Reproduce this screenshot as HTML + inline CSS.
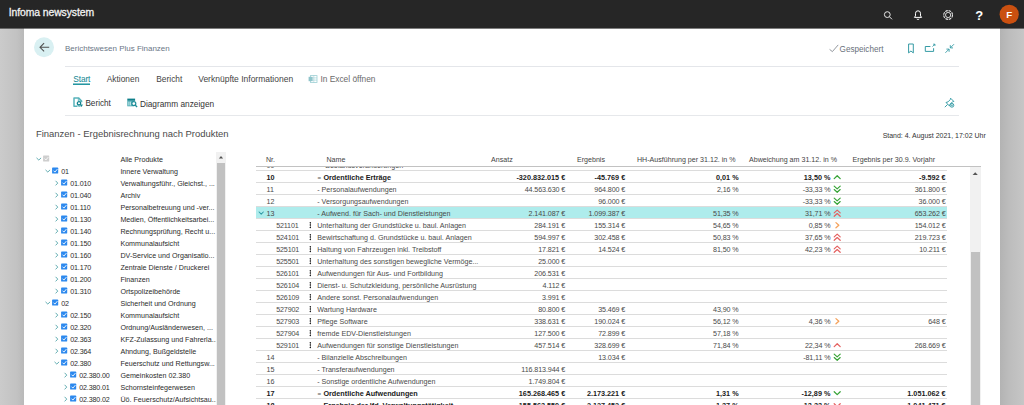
<!DOCTYPE html>
<html><head><meta charset="utf-8"><title>Infoma newsystem</title>
<style>
html,body{margin:0;padding:0}
body{width:1024px;height:405px;overflow:hidden;position:relative;background:#c4c4c4;font-family:"Liberation Sans",sans-serif;color:#333}
.a{position:absolute;white-space:nowrap}
#edgeL{left:0;top:28px;width:24px;height:377px;background:linear-gradient(90deg,#cbcbcb 0%,#c2c2c2 70%,#b9b9b9 100%)}
#edgeR{left:1000px;top:28px;width:24px;height:377px;background:linear-gradient(90deg,#b3b3b3 0%,#bcbcbc 35%,#c6c6c6 100%)}
#card{left:24px;top:28px;width:976px;height:377px;background:#fff}
#top{left:0;top:0;width:1024px;height:28px;background:#262626}
#brand{left:8.7px;top:5.8px;font-size:10.4px;line-height:14px;color:#f3f3f3;-webkit-text-stroke:0.28px #f3f3f3;letter-spacing:-0.08px}
.hl{height:1px;background:#e1e1e1}
.tab{font-size:8.35px;line-height:12px;color:#444;top:72.7px}
.act{font-size:8.2px;line-height:12px;color:#333;top:98px}
.t{font-size:7.15px;line-height:12px;color:#2b2b2b}
.r{font-size:7.15px;line-height:12px;color:#4a4a4a}
.rb{font-weight:bold;color:#1a1a1a;font-size:7.25px}
.n{text-align:right}
.th{font-size:7.1px;line-height:12px;color:#444;top:154.3px}
</style></head><body>
<div class="a" id="edgeL"></div><div class="a" id="edgeR"></div>
<div class="a" id="card"></div>
<div class="a" id="top"></div><div class="a" style="left:0;top:28px;width:1024px;height:1px;background:rgba(38,38,38,0.6)"></div>
<div class="a" id="brand">Infoma newsystem</div>

<svg class="a" style="left:870px;top:0" width="154" height="28" viewBox="0 0 154 28">
<g fill="none" stroke="#e8e8e8" stroke-width="1">
<circle cx="17.3" cy="14.6" r="2.9"/><path d="M19.5 16.8 L22 19.3"/>
<path d="M44.4 17.4 h7.2 l-1.1-1.5 v-2.6 a2.5 2.5 0 0 0-5 0 v2.6z" stroke="#fff" stroke-width="1.0" stroke-linejoin="round"/><path d="M47 18.7 a1 .9 0 0 0 2 0" stroke="#fff" stroke-width="0.9"/>
<circle cx="78.1" cy="15" r="4.4" stroke-width="1.1" stroke-dasharray="2.6 0.85"/><circle cx="78.1" cy="15" r="2.6" stroke-width="0.9"/>
</g>
<text x="109.2" y="20.1" font-family="Liberation Sans, sans-serif" font-size="13" font-weight="bold" fill="#fff" text-anchor="middle">?</text>
<circle cx="139.2" cy="14.4" r="9.6" fill="#ca5010"/>
<text x="139.2" y="18.3" font-family="Liberation Sans, sans-serif" font-size="9.8" font-weight="bold" fill="#fff" text-anchor="middle">F</text>
</svg>
<svg class="a" style="left:30px;top:34px" width="28" height="28" viewBox="0 0 28 28">
<circle cx="14" cy="13.3" r="10" fill="#d9f0f2"/>
<path d="M19.2 13.3 H10.2 M14.1 9.2 L10 13.3 L14.1 17.4" fill="none" stroke="#505050" stroke-width="1.05"/>
</svg>
<div class="a" style="left:65px;top:43.2px;font-size:7.99px;line-height:12px;color:#6a7686">Berichtswesen Plus Finanzen</div>
<div class="a hl" style="left:65px;top:66px;width:894px;background:#e4e6ea"></div>
<div class="a hl" style="left:65px;top:115px;width:894px;background:#e6e8eb"></div>
<svg class="a" style="left:826px;top:38px" width="140" height="20" viewBox="0 0 140 20">
<path d="M3.6 11.4 L6.4 13.6 L12.2 6.9" fill="none" stroke="#80858d" stroke-width="0.85"/>
<g fill="none" stroke="#2a96a0" stroke-width="0.95">
<path d="M82.6 6 h4.7 v8.9 l-2.35-1.9 l-2.35 1.9z"/>
<path d="M104.4 8.5 h-5.1 v4.9 h8.3 v-3.2"/><path d="M106.5 8.6 l2.3-2.3 M107.1 6.2 h1.8 v1.8" stroke-width="0.85"/>
<path d="M124.4 9.8 l3.6-3.6 M124.3 7.2 v2.7 h2.7 M123 11.2 l-3.6 3.6 M123.1 13.8 v-2.7 h-2.7" stroke-width="0.85"/>
</g></svg>
<div class="a" style="left:839.6px;top:44.2px;font-size:8.13px;line-height:12px;color:#69707b">Gespeichert</div>
<div class="a tab" style="left:73.3px;color:#0f8591;letter-spacing:-0.12px">Start</div>
<div class="a" style="left:73px;top:83px;width:17px;height:1px;background:rgba(37,150,161,0.55)"></div><div class="a" style="left:73px;top:84px;width:17px;height:1px;background:#2596a1"></div>
<div class="a tab" style="left:106.8px">Aktionen</div>
<div class="a tab" style="left:156.3px">Bericht</div>
<div class="a tab" style="left:198.2px;font-size:8.5px">Verknüpfte Informationen</div>
<div class="a tab" style="left:320.4px;color:#6a6a6a">In Excel öffnen</div>
<svg class="a" style="left:307.3px;top:72.7px" width="12" height="12" viewBox="0 0 12 12">
<rect x="3.4" y="2.6" width="6.6" height="6.8" fill="none" stroke="#9ccfd4" stroke-width="0.8"/>
<path d="M3.4 4.9 h6.6 M3.4 7.1 h6.6 M6.8 2.6 v6.8" stroke="#9ccfd4" stroke-width="0.6"/>
<rect x="1.6" y="3.8" width="4" height="4.4" fill="#8fc4ca"/>
</svg>
<svg class="a" style="left:70px;top:96px" width="16" height="14" viewBox="0 0 16 14">
<path d="M7.4 10.2 H4 V1.9 h4.5 l3.1 3.1 v1.2" fill="none" stroke="#58b3bb" stroke-width="1.5" stroke-linejoin="round"/>
<path d="M8.3 2 v3 h3" fill="none" stroke="#58b3bb" stroke-width="0.9"/>
<circle cx="9" cy="7.3" r="1.7" fill="#fff" stroke="#13848f" stroke-width="1.3"/>
<path d="M9.6 8.6 L12.9 8.6 L11.6 10.9z" fill="#13848f"/>
<path d="M7.6 9.8 L10.4 10.4" stroke="#3aa0aa" stroke-width="0.9"/>
</svg>
<div class="a act" style="left:85.4px">Bericht</div>
<svg class="a" style="left:124px;top:96px" width="16" height="14" viewBox="0 0 16 14">
<rect x="3.3" y="2.6" width="7.8" height="2.2" fill="#0f7f8a"/>
<rect x="3.3" y="4.8" width="6.2" height="5.5" fill="#49aab3"/>
<rect x="4.5" y="5.6" width="0.9" height="3.9" fill="#e8f6f7"/>
<rect x="6.3" y="5.6" width="0.9" height="3.9" fill="#e8f6f7"/>
<circle cx="9.8" cy="7.6" r="2" fill="#fff" stroke="#1f8e99" stroke-width="1.2"/>
<path d="M11.1 9 L13.1 10.9" stroke="#1f8e99" stroke-width="1.4"/>
</svg>
<div class="a act" style="left:139.9px;font-size:8.3px">Diagramm anzeigen</div>
<svg class="a" style="left:942px;top:96px" width="14" height="14" viewBox="0 0 14 14">
<g fill="none" stroke="#2a96a0" stroke-width="0.9" stroke-linejoin="round">
<path d="M8.6 2.2 l3.2 3.2 l-1.4 .5 l-2.2 2.2 l-.6 2 l-3.6-3.6 l2-.6 l2.2-2.2z"/>
<path d="M5.6 8.4 l-2.8 2.8"/>
<circle cx="9.9" cy="9.3" r="1.9" fill="#fff"/>
<path d="M8.8 9.3 h2.2 M9.9 8.2 v2.2" stroke-width="0.6"/>
</g></svg>
<div class="a" style="left:36px;top:127px;font-size:9.45px;line-height:14px;color:#4a4a4a">Finanzen - Ergebnisrechnung nach Produkten</div>
<div class="a" style="right:38.3px;top:130.1px;font-size:6.97px;line-height:12px;color:#333">Stand: 4. August 2021, 17:02 Uhr</div>
<div class="a t" style="left:120.4px;top:153.8px">Alle Produkte</div>
<div class="a t" style="left:61.2px;top:165.8px;letter-spacing:-0.15px">01</div>
<div class="a t" style="left:120.4px;top:165.8px">Innere Verwaltung</div>
<div class="a t" style="left:70.2px;top:177.8px;letter-spacing:-0.15px">01.010</div>
<div class="a t" style="left:120.4px;top:177.8px">Verwaltungsführ., Gleichst., ...</div>
<div class="a t" style="left:70.2px;top:189.8px;letter-spacing:-0.15px">01.040</div>
<div class="a t" style="left:120.4px;top:189.8px">Archiv</div>
<div class="a t" style="left:70.2px;top:201.8px;letter-spacing:-0.15px">01.110</div>
<div class="a t" style="left:120.4px;top:201.8px">Personalbetreuung und -ver...</div>
<div class="a t" style="left:70.2px;top:213.8px;letter-spacing:-0.15px">01.130</div>
<div class="a t" style="left:120.4px;top:213.8px">Medien, Öffentlichkeitsarbei...</div>
<div class="a t" style="left:70.2px;top:225.8px;letter-spacing:-0.15px">01.140</div>
<div class="a t" style="left:120.4px;top:225.8px">Rechnungsprüfung, Recht u...</div>
<div class="a t" style="left:70.2px;top:237.8px;letter-spacing:-0.15px">01.150</div>
<div class="a t" style="left:120.4px;top:237.8px">Kommunalaufsicht</div>
<div class="a t" style="left:70.2px;top:249.8px;letter-spacing:-0.15px">01.160</div>
<div class="a t" style="left:120.4px;top:249.8px">DV-Service und Organisatio...</div>
<div class="a t" style="left:70.2px;top:261.8px;letter-spacing:-0.15px">01.170</div>
<div class="a t" style="left:120.4px;top:261.8px">Zentrale Dienste / Druckerei</div>
<div class="a t" style="left:70.2px;top:273.8px;letter-spacing:-0.15px">01.200</div>
<div class="a t" style="left:120.4px;top:273.8px">Finanzen</div>
<div class="a t" style="left:70.2px;top:285.8px;letter-spacing:-0.15px">01.310</div>
<div class="a t" style="left:120.4px;top:285.8px">Ortspolizeibehörde</div>
<div class="a t" style="left:61.2px;top:297.8px;letter-spacing:-0.15px">02</div>
<div class="a t" style="left:120.4px;top:297.8px">Sicherheit und Ordnung</div>
<div class="a t" style="left:70.2px;top:309.8px;letter-spacing:-0.15px">02.150</div>
<div class="a t" style="left:120.4px;top:309.8px">Kommunalaufsicht</div>
<div class="a t" style="left:70.2px;top:321.8px;letter-spacing:-0.15px">02.320</div>
<div class="a t" style="left:120.4px;top:321.8px">Ordnung/Ausländerwesen, ...</div>
<div class="a t" style="left:70.2px;top:333.8px;letter-spacing:-0.15px">02.363</div>
<div class="a t" style="left:120.4px;top:333.8px">KFZ-Zulassung und Fahrerla...</div>
<div class="a t" style="left:70.2px;top:345.8px;letter-spacing:-0.15px">02.364</div>
<div class="a t" style="left:120.4px;top:345.8px">Ahndung, Bußgeldstelle</div>
<div class="a t" style="left:70.2px;top:357.8px;letter-spacing:-0.15px">02.380</div>
<div class="a t" style="left:120.4px;top:357.8px">Feuerschutz und Rettungsw...</div>
<div class="a t" style="left:79.2px;top:369.8px;letter-spacing:-0.15px">02.380.00</div>
<div class="a t" style="left:120.4px;top:369.8px">Gemeinkosten 02.380</div>
<div class="a t" style="left:79.2px;top:381.8px;letter-spacing:-0.15px">02.380.01</div>
<div class="a t" style="left:120.4px;top:381.8px">Schornsteinfegerwesen</div>
<div class="a t" style="left:79.2px;top:393.8px;letter-spacing:-0.15px">02.380.02</div>
<div class="a t" style="left:120.4px;top:393.8px">Üö. Feuerschutz/Aufsichtsau...</div>
<svg class="a" style="left:0;top:0" width="230" height="405" viewBox="0 0 230 405"><path d="M36.80 158.15 L38.80 160.05 L40.80 158.15" fill="none" stroke="#62adb2" stroke-width="1.0" stroke-linecap="round" stroke-linejoin="round"/><rect x="43.1" y="155.5" width="6.1" height="6.1" rx="0.6" fill="#cecece"/><path d="M44.6 158.6 l1.3 1.4 l2.4-2.9" fill="none" stroke="#fafafa" stroke-width="0.9"/><path d="M45.80 170.15 L47.80 172.05 L49.80 170.15" fill="none" stroke="#62adb2" stroke-width="1.0" stroke-linecap="round" stroke-linejoin="round"/><rect x="52.1" y="167.5" width="6.1" height="6.1" rx="0.7" fill="#2b88ee"/><path d="M53.6 170.7 l1.3 1.4 l2.5-3" fill="none" stroke="#fff" stroke-width="0.9"/><path d="M55.85 181.10 L57.75 183.10 L55.85 185.10" fill="none" stroke="#62adb2" stroke-width="1.0" stroke-linecap="round" stroke-linejoin="round"/><rect x="61.1" y="179.5" width="6.1" height="6.1" rx="0.7" fill="#2b88ee"/><path d="M62.6 182.7 l1.3 1.4 l2.5-3" fill="none" stroke="#fff" stroke-width="0.9"/><path d="M55.85 193.10 L57.75 195.10 L55.85 197.10" fill="none" stroke="#62adb2" stroke-width="1.0" stroke-linecap="round" stroke-linejoin="round"/><rect x="61.1" y="191.5" width="6.1" height="6.1" rx="0.7" fill="#2b88ee"/><path d="M62.6 194.7 l1.3 1.4 l2.5-3" fill="none" stroke="#fff" stroke-width="0.9"/><path d="M55.85 205.10 L57.75 207.10 L55.85 209.10" fill="none" stroke="#62adb2" stroke-width="1.0" stroke-linecap="round" stroke-linejoin="round"/><rect x="61.1" y="203.5" width="6.1" height="6.1" rx="0.7" fill="#2b88ee"/><path d="M62.6 206.7 l1.3 1.4 l2.5-3" fill="none" stroke="#fff" stroke-width="0.9"/><path d="M55.85 217.10 L57.75 219.10 L55.85 221.10" fill="none" stroke="#62adb2" stroke-width="1.0" stroke-linecap="round" stroke-linejoin="round"/><rect x="61.1" y="215.5" width="6.1" height="6.1" rx="0.7" fill="#2b88ee"/><path d="M62.6 218.7 l1.3 1.4 l2.5-3" fill="none" stroke="#fff" stroke-width="0.9"/><path d="M55.85 229.10 L57.75 231.10 L55.85 233.10" fill="none" stroke="#62adb2" stroke-width="1.0" stroke-linecap="round" stroke-linejoin="round"/><rect x="61.1" y="227.5" width="6.1" height="6.1" rx="0.7" fill="#2b88ee"/><path d="M62.6 230.7 l1.3 1.4 l2.5-3" fill="none" stroke="#fff" stroke-width="0.9"/><path d="M55.85 241.10 L57.75 243.10 L55.85 245.10" fill="none" stroke="#62adb2" stroke-width="1.0" stroke-linecap="round" stroke-linejoin="round"/><rect x="61.1" y="239.5" width="6.1" height="6.1" rx="0.7" fill="#2b88ee"/><path d="M62.6 242.7 l1.3 1.4 l2.5-3" fill="none" stroke="#fff" stroke-width="0.9"/><path d="M55.85 253.10 L57.75 255.10 L55.85 257.10" fill="none" stroke="#62adb2" stroke-width="1.0" stroke-linecap="round" stroke-linejoin="round"/><rect x="61.1" y="251.5" width="6.1" height="6.1" rx="0.7" fill="#2b88ee"/><path d="M62.6 254.7 l1.3 1.4 l2.5-3" fill="none" stroke="#fff" stroke-width="0.9"/><path d="M55.85 265.10 L57.75 267.10 L55.85 269.10" fill="none" stroke="#62adb2" stroke-width="1.0" stroke-linecap="round" stroke-linejoin="round"/><rect x="61.1" y="263.5" width="6.1" height="6.1" rx="0.7" fill="#2b88ee"/><path d="M62.6 266.7 l1.3 1.4 l2.5-3" fill="none" stroke="#fff" stroke-width="0.9"/><path d="M55.85 277.10 L57.75 279.10 L55.85 281.10" fill="none" stroke="#62adb2" stroke-width="1.0" stroke-linecap="round" stroke-linejoin="round"/><rect x="61.1" y="275.5" width="6.1" height="6.1" rx="0.7" fill="#2b88ee"/><path d="M62.6 278.7 l1.3 1.4 l2.5-3" fill="none" stroke="#fff" stroke-width="0.9"/><path d="M55.85 289.10 L57.75 291.10 L55.85 293.10" fill="none" stroke="#62adb2" stroke-width="1.0" stroke-linecap="round" stroke-linejoin="round"/><rect x="61.1" y="287.5" width="6.1" height="6.1" rx="0.7" fill="#2b88ee"/><path d="M62.6 290.7 l1.3 1.4 l2.5-3" fill="none" stroke="#fff" stroke-width="0.9"/><path d="M45.80 302.15 L47.80 304.05 L49.80 302.15" fill="none" stroke="#62adb2" stroke-width="1.0" stroke-linecap="round" stroke-linejoin="round"/><rect x="52.1" y="299.5" width="6.1" height="6.1" rx="0.7" fill="#2b88ee"/><path d="M53.6 302.7 l1.3 1.4 l2.5-3" fill="none" stroke="#fff" stroke-width="0.9"/><path d="M55.85 313.10 L57.75 315.10 L55.85 317.10" fill="none" stroke="#62adb2" stroke-width="1.0" stroke-linecap="round" stroke-linejoin="round"/><rect x="61.1" y="311.5" width="6.1" height="6.1" rx="0.7" fill="#2b88ee"/><path d="M62.6 314.7 l1.3 1.4 l2.5-3" fill="none" stroke="#fff" stroke-width="0.9"/><path d="M55.85 325.10 L57.75 327.10 L55.85 329.10" fill="none" stroke="#62adb2" stroke-width="1.0" stroke-linecap="round" stroke-linejoin="round"/><rect x="61.1" y="323.5" width="6.1" height="6.1" rx="0.7" fill="#2b88ee"/><path d="M62.6 326.7 l1.3 1.4 l2.5-3" fill="none" stroke="#fff" stroke-width="0.9"/><path d="M55.85 337.10 L57.75 339.10 L55.85 341.10" fill="none" stroke="#62adb2" stroke-width="1.0" stroke-linecap="round" stroke-linejoin="round"/><rect x="61.1" y="335.5" width="6.1" height="6.1" rx="0.7" fill="#2b88ee"/><path d="M62.6 338.7 l1.3 1.4 l2.5-3" fill="none" stroke="#fff" stroke-width="0.9"/><path d="M55.85 349.10 L57.75 351.10 L55.85 353.10" fill="none" stroke="#62adb2" stroke-width="1.0" stroke-linecap="round" stroke-linejoin="round"/><rect x="61.1" y="347.5" width="6.1" height="6.1" rx="0.7" fill="#2b88ee"/><path d="M62.6 350.7 l1.3 1.4 l2.5-3" fill="none" stroke="#fff" stroke-width="0.9"/><path d="M54.80 362.15 L56.80 364.05 L58.80 362.15" fill="none" stroke="#62adb2" stroke-width="1.0" stroke-linecap="round" stroke-linejoin="round"/><rect x="61.1" y="359.5" width="6.1" height="6.1" rx="0.7" fill="#2b88ee"/><path d="M62.6 362.7 l1.3 1.4 l2.5-3" fill="none" stroke="#fff" stroke-width="0.9"/><path d="M64.85 373.10 L66.75 375.10 L64.85 377.10" fill="none" stroke="#62adb2" stroke-width="1.0" stroke-linecap="round" stroke-linejoin="round"/><rect x="70.1" y="371.5" width="6.1" height="6.1" rx="0.7" fill="#2b88ee"/><path d="M71.6 374.7 l1.3 1.4 l2.5-3" fill="none" stroke="#fff" stroke-width="0.9"/><path d="M64.85 385.10 L66.75 387.10 L64.85 389.10" fill="none" stroke="#62adb2" stroke-width="1.0" stroke-linecap="round" stroke-linejoin="round"/><rect x="70.1" y="383.5" width="6.1" height="6.1" rx="0.7" fill="#2b88ee"/><path d="M71.6 386.7 l1.3 1.4 l2.5-3" fill="none" stroke="#fff" stroke-width="0.9"/><path d="M64.85 397.10 L66.75 399.10 L64.85 401.10" fill="none" stroke="#62adb2" stroke-width="1.0" stroke-linecap="round" stroke-linejoin="round"/><rect x="70.1" y="395.5" width="6.1" height="6.1" rx="0.7" fill="#2b88ee"/><path d="M71.6 398.7 l1.3 1.4 l2.5-3" fill="none" stroke="#fff" stroke-width="0.9"/></svg>
<div class="a" style="left:216px;top:151.5px;width:10px;height:254px;background:#f1f1f1"></div>
<div class="a" style="left:217px;top:163px;width:8.4px;height:243px;background:#c1c1c1"></div>
<svg class="a" style="left:216px;top:151px" width="10" height="12" viewBox="0 0 10 12"><path d="M2.9 7.6 L5 5.1 L7.1 7.6z" fill="#505050"/></svg>
<div class="a th" style="left:266px">Nr.</div>
<div class="a th" style="left:326.5px">Name</div>
<div class="a th" style="left:491px">Ansatz</div>
<div class="a th" style="left:577px">Ergebnis</div>
<div class="a th" style="left:637px">HH-Ausführung per 31.12. in %</div>
<div class="a th" style="left:749px">Abweichung am 31.12. in %</div>
<div class="a th" style="left:852.6px">Ergebnis per 30.9. Vorjahr</div>
<div class="a" style="left:0;top:166px;width:1024px;height:239px;overflow:hidden">
<div class="a" style="left:256px;top:4.3px;width:691px;height:1px;background:#dcdcdc"></div>
<div class="a r" style="left:266.6px;top:-6.5px;letter-spacing:-0.15px">09</div>
<div class="a r" style="left:319.2px;top:-6.5px">+ Bestandsveränderungen</div>
<div class="a" style="left:256px;top:16.3px;width:691px;height:1px;background:#dcdcdc"></div>
<div class="a r rb" style="left:266.6px;top:5.5px;letter-spacing:-0.15px">10</div>
<div class="a r rb" style="left:317.2px;top:5.5px"><span style="display:inline-block;width:4.2px;font-weight:normal;color:#555;font-size:6.2px;text-align:center">=</span> Ordentliche Erträge</div>
<div class="a r rb n" style="right:458.8px;top:5.5px;letter-spacing:0">-320.832.015 €</div>
<div class="a r rb n" style="right:398.8px;top:5.5px;letter-spacing:0">-45.769 €</div>
<div class="a r rb n" style="right:285.4px;top:5.5px;letter-spacing:0">0,01 %</div>
<div class="a r rb n" style="right:193.6px;top:5.5px;letter-spacing:0">13,50 %</div>
<div class="a r rb n" style="right:78.4px;top:5.5px;letter-spacing:0">-9.592 €</div>
<div class="a" style="left:256px;top:28.3px;width:691px;height:1px;background:#dcdcdc"></div>
<div class="a r" style="left:266.6px;top:17.5px;letter-spacing:-0.15px">11</div>
<div class="a r" style="left:317.2px;top:17.5px">- Personalaufwendungen</div>
<div class="a r n" style="right:458.8px;top:17.5px;letter-spacing:-0.1px">44.563.630 €</div>
<div class="a r n" style="right:398.8px;top:17.5px;letter-spacing:-0.1px">964.800 €</div>
<div class="a r n" style="right:285.4px;top:17.5px;letter-spacing:-0.1px">2,16 %</div>
<div class="a r n" style="right:193.6px;top:17.5px;letter-spacing:-0.1px">-33,33 %</div>
<div class="a r n" style="right:78.4px;top:17.5px;letter-spacing:-0.1px">361.800 €</div>
<div class="a" style="left:256px;top:40.3px;width:691px;height:1px;background:#dcdcdc"></div>
<div class="a r" style="left:266.6px;top:29.5px;letter-spacing:-0.15px">12</div>
<div class="a r" style="left:317.2px;top:29.5px">- Versorgungsaufwendungen</div>
<div class="a r n" style="right:398.8px;top:29.5px;letter-spacing:-0.1px">96.000 €</div>
<div class="a r n" style="right:193.6px;top:29.5px;letter-spacing:-0.1px">-33,33 %</div>
<div class="a r n" style="right:78.4px;top:29.5px;letter-spacing:-0.1px">36.000 €</div>
<div class="a" style="left:256px;top:41.1px;width:691px;height:11.4px;background:#aeecec"></div>
<div class="a" style="left:256px;top:52.3px;width:691px;height:1px;background:#dcdcdc"></div>
<div class="a r" style="left:266.6px;top:41.5px;letter-spacing:-0.15px">13</div>
<div class="a r" style="left:317.2px;top:41.5px">- Aufwend. für Sach- und Dienstleistungen</div>
<div class="a r n" style="right:458.8px;top:41.5px;letter-spacing:-0.1px">2.141.087 €</div>
<div class="a r n" style="right:398.8px;top:41.5px;letter-spacing:-0.1px">1.099.387 €</div>
<div class="a r n" style="right:285.4px;top:41.5px;letter-spacing:-0.1px">51,35 %</div>
<div class="a r n" style="right:193.6px;top:41.5px;letter-spacing:-0.1px">31,71 %</div>
<div class="a r n" style="right:78.4px;top:41.5px;letter-spacing:-0.1px">653.262 €</div>
<div class="a" style="left:256px;top:64.3px;width:691px;height:1px;background:#dcdcdc"></div>
<div class="a r" style="left:276.2px;top:53.5px;letter-spacing:-0.15px">521101</div>
<div class="a r" style="left:317.2px;top:53.5px">Unterhaltung der Grundstücke u. baul. Anlagen</div>
<div class="a r n" style="right:458.8px;top:53.5px;letter-spacing:-0.1px">284.191 €</div>
<div class="a r n" style="right:398.8px;top:53.5px;letter-spacing:-0.1px">155.314 €</div>
<div class="a r n" style="right:285.4px;top:53.5px;letter-spacing:-0.1px">54,65 %</div>
<div class="a r n" style="right:193.6px;top:53.5px;letter-spacing:-0.1px">0,85 %</div>
<div class="a r n" style="right:78.4px;top:53.5px;letter-spacing:-0.1px">154.012 €</div>
<div class="a" style="left:256px;top:76.3px;width:691px;height:1px;background:#dcdcdc"></div>
<div class="a r" style="left:276.2px;top:65.5px;letter-spacing:-0.15px">524101</div>
<div class="a r" style="left:317.2px;top:65.5px">Bewirtschaftung d. Grundstücke u. baul. Anlagen</div>
<div class="a r n" style="right:458.8px;top:65.5px;letter-spacing:-0.1px">594.997 €</div>
<div class="a r n" style="right:398.8px;top:65.5px;letter-spacing:-0.1px">302.458 €</div>
<div class="a r n" style="right:285.4px;top:65.5px;letter-spacing:-0.1px">50,83 %</div>
<div class="a r n" style="right:193.6px;top:65.5px;letter-spacing:-0.1px">37,65 %</div>
<div class="a r n" style="right:78.4px;top:65.5px;letter-spacing:-0.1px">219.723 €</div>
<div class="a" style="left:256px;top:88.3px;width:691px;height:1px;background:#dcdcdc"></div>
<div class="a r" style="left:276.2px;top:77.5px;letter-spacing:-0.15px">525101</div>
<div class="a r" style="left:317.2px;top:77.5px">Haltung von Fahrzeugen inkl. Treibstoff</div>
<div class="a r n" style="right:458.8px;top:77.5px;letter-spacing:-0.1px">17.821 €</div>
<div class="a r n" style="right:398.8px;top:77.5px;letter-spacing:-0.1px">14.524 €</div>
<div class="a r n" style="right:285.4px;top:77.5px;letter-spacing:-0.1px">81,50 %</div>
<div class="a r n" style="right:193.6px;top:77.5px;letter-spacing:-0.1px">42,23 %</div>
<div class="a r n" style="right:78.4px;top:77.5px;letter-spacing:-0.1px">10.211 €</div>
<div class="a" style="left:256px;top:100.3px;width:691px;height:1px;background:#dcdcdc"></div>
<div class="a r" style="left:276.2px;top:89.5px;letter-spacing:-0.15px">525501</div>
<div class="a r" style="left:317.2px;top:89.5px">Unterhaltung des sonstigen bewegliche Vermöge...</div>
<div class="a r n" style="right:458.8px;top:89.5px;letter-spacing:-0.1px">25.000 €</div>
<div class="a" style="left:256px;top:112.3px;width:691px;height:1px;background:#dcdcdc"></div>
<div class="a r" style="left:276.2px;top:101.5px;letter-spacing:-0.15px">526101</div>
<div class="a r" style="left:317.2px;top:101.5px">Aufwendungen für Aus- und Fortbildung</div>
<div class="a r n" style="right:458.8px;top:101.5px;letter-spacing:-0.1px">206.531 €</div>
<div class="a" style="left:256px;top:124.3px;width:691px;height:1px;background:#dcdcdc"></div>
<div class="a r" style="left:276.2px;top:113.5px;letter-spacing:-0.15px">526104</div>
<div class="a r" style="left:317.2px;top:113.5px">Dienst- u. Schutzkleidung, persönliche Ausrüstung</div>
<div class="a r n" style="right:458.8px;top:113.5px;letter-spacing:-0.1px">4.112 €</div>
<div class="a" style="left:256px;top:136.3px;width:691px;height:1px;background:#dcdcdc"></div>
<div class="a r" style="left:276.2px;top:125.5px;letter-spacing:-0.15px">526109</div>
<div class="a r" style="left:317.2px;top:125.5px">Andere sonst. Personalaufwendungen</div>
<div class="a r n" style="right:458.8px;top:125.5px;letter-spacing:-0.1px">3.991 €</div>
<div class="a" style="left:256px;top:148.3px;width:691px;height:1px;background:#dcdcdc"></div>
<div class="a r" style="left:276.2px;top:137.5px;letter-spacing:-0.15px">527902</div>
<div class="a r" style="left:317.2px;top:137.5px">Wartung Hardware</div>
<div class="a r n" style="right:458.8px;top:137.5px;letter-spacing:-0.1px">80.800 €</div>
<div class="a r n" style="right:398.8px;top:137.5px;letter-spacing:-0.1px">35.469 €</div>
<div class="a r n" style="right:285.4px;top:137.5px;letter-spacing:-0.1px">43,90 %</div>
<div class="a" style="left:256px;top:160.3px;width:691px;height:1px;background:#dcdcdc"></div>
<div class="a r" style="left:276.2px;top:149.5px;letter-spacing:-0.15px">527903</div>
<div class="a r" style="left:317.2px;top:149.5px">Pflege Software</div>
<div class="a r n" style="right:458.8px;top:149.5px;letter-spacing:-0.1px">338.631 €</div>
<div class="a r n" style="right:398.8px;top:149.5px;letter-spacing:-0.1px">190.024 €</div>
<div class="a r n" style="right:285.4px;top:149.5px;letter-spacing:-0.1px">56,12 %</div>
<div class="a r n" style="right:193.6px;top:149.5px;letter-spacing:-0.1px">4,36 %</div>
<div class="a r n" style="right:78.4px;top:149.5px;letter-spacing:-0.1px">648 €</div>
<div class="a" style="left:256px;top:172.3px;width:691px;height:1px;background:#dcdcdc"></div>
<div class="a r" style="left:276.2px;top:161.5px;letter-spacing:-0.15px">527904</div>
<div class="a r" style="left:317.2px;top:161.5px">fremde EDV-Dienstleistungen</div>
<div class="a r n" style="right:458.8px;top:161.5px;letter-spacing:-0.1px">127.500 €</div>
<div class="a r n" style="right:398.8px;top:161.5px;letter-spacing:-0.1px">72.899 €</div>
<div class="a r n" style="right:285.4px;top:161.5px;letter-spacing:-0.1px">57,18 %</div>
<div class="a" style="left:256px;top:184.3px;width:691px;height:1px;background:#dcdcdc"></div>
<div class="a r" style="left:276.2px;top:173.5px;letter-spacing:-0.15px">529101</div>
<div class="a r" style="left:317.2px;top:173.5px">Aufwendungen für sonstige Dienstleistungen</div>
<div class="a r n" style="right:458.8px;top:173.5px;letter-spacing:-0.1px">457.514 €</div>
<div class="a r n" style="right:398.8px;top:173.5px;letter-spacing:-0.1px">328.699 €</div>
<div class="a r n" style="right:285.4px;top:173.5px;letter-spacing:-0.1px">71,84 %</div>
<div class="a r n" style="right:193.6px;top:173.5px;letter-spacing:-0.1px">22,34 %</div>
<div class="a r n" style="right:78.4px;top:173.5px;letter-spacing:-0.1px">268.669 €</div>
<div class="a" style="left:256px;top:196.3px;width:691px;height:1px;background:#dcdcdc"></div>
<div class="a r" style="left:266.6px;top:185.5px;letter-spacing:-0.15px">14</div>
<div class="a r" style="left:317.2px;top:185.5px">- Bilanzielle Abschreibungen</div>
<div class="a r n" style="right:398.8px;top:185.5px;letter-spacing:-0.1px">13.034 €</div>
<div class="a r n" style="right:193.6px;top:185.5px;letter-spacing:-0.1px">-81,11 %</div>
<div class="a" style="left:256px;top:208.3px;width:691px;height:1px;background:#dcdcdc"></div>
<div class="a r" style="left:266.6px;top:197.5px;letter-spacing:-0.15px">15</div>
<div class="a r" style="left:317.2px;top:197.5px">- Transferaufwendungen</div>
<div class="a r n" style="right:458.8px;top:197.5px;letter-spacing:-0.1px">116.813.944 €</div>
<div class="a" style="left:256px;top:220.3px;width:691px;height:1px;background:#dcdcdc"></div>
<div class="a r" style="left:266.6px;top:209.5px;letter-spacing:-0.15px">16</div>
<div class="a r" style="left:317.2px;top:209.5px">- Sonstige ordentliche Aufwendungen</div>
<div class="a r n" style="right:458.8px;top:209.5px;letter-spacing:-0.1px">1.749.804 €</div>
<div class="a" style="left:256px;top:232.3px;width:691px;height:1px;background:#dcdcdc"></div>
<div class="a r rb" style="left:266.6px;top:221.5px;letter-spacing:-0.15px">17</div>
<div class="a r rb" style="left:317.2px;top:221.5px"><span style="display:inline-block;width:4.2px;font-weight:normal;color:#555;font-size:6.2px;text-align:center">=</span> Ordentliche Aufwendungen</div>
<div class="a r rb n" style="right:458.8px;top:221.5px;letter-spacing:0">165.268.465 €</div>
<div class="a r rb n" style="right:398.8px;top:221.5px;letter-spacing:0">2.173.221 €</div>
<div class="a r rb n" style="right:285.4px;top:221.5px;letter-spacing:0">1,31 %</div>
<div class="a r rb n" style="right:193.6px;top:221.5px;letter-spacing:0">-12,89 %</div>
<div class="a r rb n" style="right:78.4px;top:221.5px;letter-spacing:0">1.051.062 €</div>
<div class="a" style="left:256px;top:244.3px;width:691px;height:1px;background:#dcdcdc"></div>
<div class="a r rb" style="left:266.6px;top:233.5px;letter-spacing:-0.15px">18</div>
<div class="a r rb" style="left:317.2px;top:233.5px"><span style="display:inline-block;width:4.2px;font-weight:normal;color:#555;font-size:6.2px;text-align:center">=</span> Ergebnis der lfd. Verwaltungstätigkeit</div>
<div class="a r rb n" style="right:458.8px;top:233.5px;letter-spacing:0">155.563.550 €</div>
<div class="a r rb n" style="right:398.8px;top:233.5px;letter-spacing:0">2.127.452 €</div>
<div class="a r rb n" style="right:285.4px;top:233.5px;letter-spacing:0">1,37 %</div>
<div class="a r rb n" style="right:193.6px;top:233.5px;letter-spacing:0">13,33 %</div>
<div class="a r rb n" style="right:78.4px;top:233.5px;letter-spacing:0">1.041.471 €</div>
<svg class="a" style="left:0;top:0" width="1024" height="239" viewBox="0 0 1024 239"><path d="M834.20 12.65 L837.20 9.75 L840.20 12.65" fill="none" stroke="#36a336" stroke-width="1.25" stroke-linecap="round" stroke-linejoin="round"/><path d="M834.20 20.15 L837.20 22.85 L840.20 20.15" fill="none" stroke="#36a336" stroke-width="1.2" stroke-linecap="round" stroke-linejoin="round"/><path d="M834.20 23.55 L837.20 26.25 L840.20 23.55" fill="none" stroke="#36a336" stroke-width="1.2" stroke-linecap="round" stroke-linejoin="round"/><path d="M834.20 32.15 L837.20 34.85 L840.20 32.15" fill="none" stroke="#36a336" stroke-width="1.2" stroke-linecap="round" stroke-linejoin="round"/><path d="M834.20 35.55 L837.20 38.25 L840.20 35.55" fill="none" stroke="#36a336" stroke-width="1.2" stroke-linecap="round" stroke-linejoin="round"/><path d="M259.10 46.00 L261.20 48.20 L263.30 46.00" fill="none" stroke="#2f9ba6" stroke-width="1.05" stroke-linecap="round" stroke-linejoin="round"/><path d="M834.20 46.85 L837.20 44.15 L840.20 46.85" fill="none" stroke="#e46060" stroke-width="1.2" stroke-linecap="round" stroke-linejoin="round"/><path d="M834.20 50.25 L837.20 47.55 L840.20 50.25" fill="none" stroke="#e46060" stroke-width="1.2" stroke-linecap="round" stroke-linejoin="round"/><g fill="#1c1c1c"><circle cx="310.3" cy="56.7" r="0.75"/><circle cx="310.3" cy="59.1" r="0.75"/><circle cx="310.3" cy="61.5" r="0.75"/><rect x="310.1" y="56.7" width="0.4" height="4.8"/></g><path d="M835.95 56.60 L838.85 59.20 L835.95 61.80" fill="none" stroke="#f5a15a" stroke-width="1.25" stroke-linecap="round" stroke-linejoin="round"/><g fill="#1c1c1c"><circle cx="310.3" cy="68.7" r="0.75"/><circle cx="310.3" cy="71.1" r="0.75"/><circle cx="310.3" cy="73.5" r="0.75"/><rect x="310.1" y="68.7" width="0.4" height="4.8"/></g><path d="M834.20 70.85 L837.20 68.15 L840.20 70.85" fill="none" stroke="#e46060" stroke-width="1.2" stroke-linecap="round" stroke-linejoin="round"/><path d="M834.20 74.25 L837.20 71.55 L840.20 74.25" fill="none" stroke="#e46060" stroke-width="1.2" stroke-linecap="round" stroke-linejoin="round"/><g fill="#1c1c1c"><circle cx="310.3" cy="80.7" r="0.75"/><circle cx="310.3" cy="83.1" r="0.75"/><circle cx="310.3" cy="85.5" r="0.75"/><rect x="310.1" y="80.7" width="0.4" height="4.8"/></g><path d="M834.20 82.85 L837.20 80.15 L840.20 82.85" fill="none" stroke="#e46060" stroke-width="1.2" stroke-linecap="round" stroke-linejoin="round"/><path d="M834.20 86.25 L837.20 83.55 L840.20 86.25" fill="none" stroke="#e46060" stroke-width="1.2" stroke-linecap="round" stroke-linejoin="round"/><g fill="#1c1c1c"><circle cx="310.3" cy="92.7" r="0.75"/><circle cx="310.3" cy="95.1" r="0.75"/><circle cx="310.3" cy="97.5" r="0.75"/><rect x="310.1" y="92.7" width="0.4" height="4.8"/></g><g fill="#1c1c1c"><circle cx="310.3" cy="104.7" r="0.75"/><circle cx="310.3" cy="107.1" r="0.75"/><circle cx="310.3" cy="109.5" r="0.75"/><rect x="310.1" y="104.7" width="0.4" height="4.8"/></g><g fill="#1c1c1c"><circle cx="310.3" cy="116.7" r="0.75"/><circle cx="310.3" cy="119.1" r="0.75"/><circle cx="310.3" cy="121.5" r="0.75"/><rect x="310.1" y="116.7" width="0.4" height="4.8"/></g><g fill="#1c1c1c"><circle cx="310.3" cy="128.7" r="0.75"/><circle cx="310.3" cy="131.1" r="0.75"/><circle cx="310.3" cy="133.5" r="0.75"/><rect x="310.1" y="128.7" width="0.4" height="4.8"/></g><g fill="#1c1c1c"><circle cx="310.3" cy="140.7" r="0.75"/><circle cx="310.3" cy="143.1" r="0.75"/><circle cx="310.3" cy="145.5" r="0.75"/><rect x="310.1" y="140.7" width="0.4" height="4.8"/></g><g fill="#1c1c1c"><circle cx="310.3" cy="152.7" r="0.75"/><circle cx="310.3" cy="155.1" r="0.75"/><circle cx="310.3" cy="157.5" r="0.75"/><rect x="310.1" y="152.7" width="0.4" height="4.8"/></g><path d="M835.95 152.60 L838.85 155.20 L835.95 157.80" fill="none" stroke="#f5a15a" stroke-width="1.25" stroke-linecap="round" stroke-linejoin="round"/><g fill="#1c1c1c"><circle cx="310.3" cy="164.7" r="0.75"/><circle cx="310.3" cy="167.1" r="0.75"/><circle cx="310.3" cy="169.5" r="0.75"/><rect x="310.1" y="164.7" width="0.4" height="4.8"/></g><g fill="#1c1c1c"><circle cx="310.3" cy="176.7" r="0.75"/><circle cx="310.3" cy="179.1" r="0.75"/><circle cx="310.3" cy="181.5" r="0.75"/><rect x="310.1" y="176.7" width="0.4" height="4.8"/></g><path d="M834.20 180.65 L837.20 177.75 L840.20 180.65" fill="none" stroke="#e46060" stroke-width="1.25" stroke-linecap="round" stroke-linejoin="round"/><path d="M834.20 188.15 L837.20 190.85 L840.20 188.15" fill="none" stroke="#36a336" stroke-width="1.2" stroke-linecap="round" stroke-linejoin="round"/><path d="M834.20 191.55 L837.20 194.25 L840.20 191.55" fill="none" stroke="#36a336" stroke-width="1.2" stroke-linecap="round" stroke-linejoin="round"/><path d="M834.20 225.75 L837.20 228.65 L840.20 225.75" fill="none" stroke="#36a336" stroke-width="1.25" stroke-linecap="round" stroke-linejoin="round"/><path d="M834.20 237.75 L837.20 240.65 L840.20 237.75" fill="none" stroke="#e46060" stroke-width="1.25" stroke-linecap="round" stroke-linejoin="round"/></svg>
</div>
<div class="a" style="left:256px;top:165.6px;width:725px;height:1px;background:#c2c2c2"></div>
<div class="a" style="left:970px;top:167px;width:10.6px;height:238px;background:#f1f1f1"></div>
<div class="a" style="left:970.6px;top:252.4px;width:9.6px;height:153px;background:#c1c1c1"></div>
<svg class="a" style="left:970px;top:167px" width="11" height="12" viewBox="0 0 11 12"><path d="M2.6 8.0 L5.2 5.3 L7.8 8.0z" fill="#555"/></svg>
</body></html>
